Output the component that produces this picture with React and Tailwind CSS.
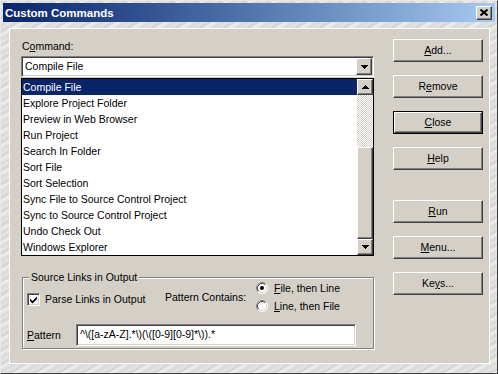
import React from "react";

const F = "font-['Liberation_Sans',Arial,sans-serif]";
const raised =
  "bg-[#d4d0c8] border border-t-white border-l-white border-r-[#404040] border-b-[#404040] shadow-[inset_-1px_-1px_0_#808080]";
const sunken =
  "bg-white border border-t-[#808080] border-l-[#808080] border-r-white border-b-white shadow-[inset_1px_1px_0_#404040,inset_-1px_-1px_0_#d4d0c8]";

function U({ children }) {
  return <span className="underline underline-offset-[1px]">{children}</span>;
}

function Down() {
  return (
    <svg width="7" height="4" viewBox="0 0 7 4" shapeRendering="crispEdges">
      <path d="M0 0H7V1H6V2H5V3H4V4H3V3H2V2H1V1H0Z" fill="#000" />
    </svg>
  );
}
function Up() {
  return (
    <svg width="7" height="4" viewBox="0 0 7 4" shapeRendering="crispEdges">
      <path d="M3 0H4V1H5V2H6V3H7V4H0V3H1V2H2V1H3Z" fill="#000" />
    </svg>
  );
}

function Radio({ checked }) {
  return (
    <svg width="12" height="12" viewBox="0 0 12 12">
      <circle cx="6" cy="6" r="5.5" fill="#fff" />
      <path d="M9.89 2.11A5.5 5.5 0 0 0 2.11 9.89" stroke="#808080" fill="none" />
      <path d="M2.11 9.89A5.5 5.5 0 0 0 9.89 2.11" stroke="#ffffff" fill="none" />
      <path d="M9.18 2.82A4.5 4.5 0 0 0 2.82 9.18" stroke="#404040" fill="none" />
      <path d="M2.82 9.18A4.5 4.5 0 0 0 9.18 2.82" stroke="#d4d0c8" fill="none" />
      {checked && <circle cx="6" cy="6" r="2" fill="#000" />}
    </svg>
  );
}

const items = [
  "Compile File",
  "Explore Project Folder",
  "Preview in Web Browser",
  "Run Project",
  "Search In Folder",
  "Sort File",
  "Sort Selection",
  "Sync File to Source Control Project",
  "Sync to Source Control Project",
  "Undo Check Out",
  "Windows Explorer",
];

function Btn({ children, mt, def }) {
  const inner = (
    <div className={`${raised} w-full h-full flex items-center justify-center text-[10.5px] leading-[13px]`}>
      {children}
    </div>
  );
  if (def)
    return (
      <div className={`${mt} w-[90px] h-[23px] border border-black`}>{inner}</div>
    );
  return <div className={`${mt} w-[90px] h-[23px]`}>{inner}</div>;
}

export default function App() {
  return (
    <div
      className={`${F} w-[498px] h-[374px] border border-t-[#e8e8e8] border-l-[#e8e8e8] border-r-[#404040] border-b-[#404040] p-[2px] bg-[repeating-linear-gradient(150deg,#e2e2e2_0px,#d3d3d3_3px,#efefef_5px,#d9d9d9_9px,#e6e6e6_12px)] text-black`}
    >
      <div className="h-[19px] flex items-center justify-between pl-[2px] pr-[3px] bg-linear-to-r from-[#0a246a] to-[#a6caf0]">
        <span className="text-white font-bold text-[11.5px] leading-[14px]">Custom Commands</span>
        <div className={`${raised} w-[16px] h-[14px] flex items-center justify-center`}>
          <svg width="8" height="7" viewBox="0 0 8 7">
            <path d="M0.5 0.5L7.5 6.5M7.5 0.5L0.5 6.5" stroke="#000" strokeWidth="2" />
          </svg>
        </div>
      </div>

      <div className="mt-[6px] ml-[6px] w-[481px] h-[336px] bg-[#d4d0c8] border border-white flex">
        <div className="pl-[11px] pt-[11px] w-[364px]">
          <div className="h-[13px] leading-[13px] text-[10.5px] pl-[1px]">
            C<U>o</U>mmand:
          </div>

          <div className={`mt-[3px] h-[21px] w-[353px] flex p-[1px] ${sunken}`}>
            <div className="flex-1 pl-[2px] text-[10.5px] leading-[17px]">Compile File</div>
            <div className={`${raised} w-[16px] h-full flex items-center justify-center`}>
              <Down />
            </div>
          </div>

          <div className="mt-[1px] h-[178px] w-[353px] border border-black bg-white flex">
            <div className="flex-1 flex flex-col">
              {items.map((t, i) => (
                <div
                  key={t}
                  className={`h-[16px] leading-[16px] text-[10.5px] pl-[1px] ${
                    i === 0 ? "bg-[#0a246a] text-white" : ""
                  }`}
                >
                  {t}
                </div>
              ))}
            </div>
            <div className="w-[16px] flex flex-col">
              <div className={`${raised} h-[16px] flex items-center justify-center`}>
                <Up />
              </div>
              <div className="h-[52px] bg-[repeating-conic-gradient(#d4d0c8_0_25%,#ffffff_0_50%)] bg-[length:2px_2px]" />
              <div className={`${raised} h-[92px]`} />
              <div className={`${raised} h-[16px] flex items-center justify-center`}>
                <Down />
              </div>
            </div>
          </div>

          <fieldset className="mt-[15px] ml-[1px] w-[352px] h-[78px] border border-[#808080] shadow-[inset_1px_1px_0_#fff,1px_1px_0_#fff] text-[10.5px]">
            <legend className="ml-[6px] px-[2px] leading-[13px] bg-[#d4d0c8]">
              Source Links in Output
            </legend>
            <div className="flex h-[31px] items-start">
              <div className="w-[142px] pl-[4px] mt-[9px] flex items-center">
                <div className={`${sunken} w-[13px] h-[13px] flex items-center justify-center`}>
                  <svg width="7" height="8" viewBox="0 0 7 8">
                    <path d="M0 2.5L2.5 5L7 0.5V3L2.5 7.5L0 5Z" fill="#000" />
                  </svg>
                </div>
                <span className="ml-[5px] leading-[13px]">Parse Links in Output</span>
              </div>
              <div className="w-[91px] mt-[7px] leading-[13px]">Pattern Contains:</div>
              <div className="-mt-[5px] flex flex-col">
                <div className="h-[18px] flex items-center">
                  <Radio checked />
                  <span className="ml-[6px] leading-[13px]">
                    <U>F</U>ile, then Line
                  </span>
                </div>
                <div className="h-[18px] flex items-center">
                  <Radio />
                  <span className="ml-[6px] leading-[13px]">
                    <U>L</U>ine, then File
                  </span>
                </div>
              </div>
            </div>
            <div className="mt-[9px] h-[22px] flex items-center pl-[4px]">
              <div className="w-[49px] leading-[13px]">
                <U>P</U>attern
              </div>
              <div className={`${sunken} w-[280px] h-[22px] pl-[3px] leading-[19px]`}>
                {"^\\([a-zA-Z].*\\)(\\([0-9][0-9]*\\)).*"}
              </div>
            </div>
          </fieldset>
        </div>

        <div className="ml-[19px] w-[90px] flex flex-col">
          <Btn mt="mt-[10px]">
            <U>A</U>dd...
          </Btn>
          <Btn mt="mt-[13px]">
            R<U>e</U>move
          </Btn>
          <Btn mt="mt-[13px]" def>
            <U>C</U>lose
          </Btn>
          <Btn mt="mt-[13px]">
            <U>H</U>elp
          </Btn>
          <Btn mt="mt-[30px]">
            <U>R</U>un
          </Btn>
          <Btn mt="mt-[13px]">
            <U>M</U>enu...
          </Btn>
          <Btn mt="mt-[13px]">
            Ke<U>y</U>s...
          </Btn>
        </div>
      </div>
    </div>
  );
}
